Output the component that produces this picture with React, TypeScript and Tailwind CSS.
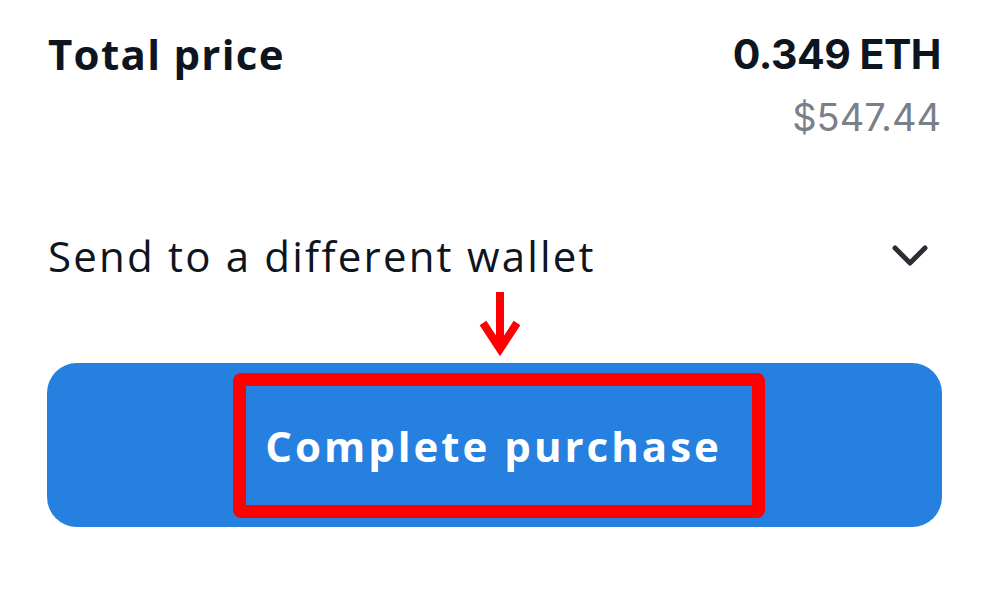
import React from "react";

export default function App() {
  return (
    <div className="w-[1000px] h-[601px] bg-white relative overflow-hidden" style={{ fontFamily: "'Open Sans', sans-serif" }}>
      <div className="pl-[48px] pr-[59px] pt-[28px]">
        <div className="flex justify-between items-start">
          <div className="text-[42px] leading-[52px] font-bold text-[#0d1520] tracking-[1.3px]">Total price</div>
          <div className="flex flex-col items-end" style={{ fontFamily: "Inter, sans-serif" }}>
            <div className="text-[41px] leading-[52px] font-bold text-[#0d1520] tracking-[-0.5px]">0.349 ETH</div>
            <div className="text-[38px] leading-[50px] text-[#7a8089] mt-[12px]">$547.44</div>
          </div>
        </div>
        <div className="flex justify-between items-center mt-[89px]">
          <div className="text-[42px] leading-[50px] text-[#0d1520] tracking-[2.2px]">Send to a different wallet</div>
          <svg width="40" height="26" viewBox="0 0 40 26" className="mr-[11px]">
            <path d="M5 5 L20 20 L35 5" fill="none" stroke="#2a2f36" strokeWidth="5" strokeLinecap="round" strokeLinejoin="round" />
          </svg>
        </div>
      </div>
      <div className="relative mx-[47px] mt-[82px]">
        <svg width="44" height="66" viewBox="0 0 44 66" className="absolute left-[431px] top-[-71px]">
          <path d="M22 0 L22 58" stroke="#ff0000" strokeWidth="8" />
          <path d="M5 31 L22 57 L39 31" fill="none" stroke="#ff0000" strokeWidth="8" strokeLinejoin="miter" />
        </svg>
        <button className="w-[895px] h-[164px] bg-[#2680e0] rounded-[30px] flex items-center justify-center">
          <span className="ml-[8px] w-[532px] h-[145px] border-[13px] border-[#ff0000] rounded-[8px] flex items-center justify-center text-white text-[42px] font-bold tracking-[3px] pr-[10px]">
            Complete purchase
          </span>
        </button>
      </div>
    </div>
  );
}
